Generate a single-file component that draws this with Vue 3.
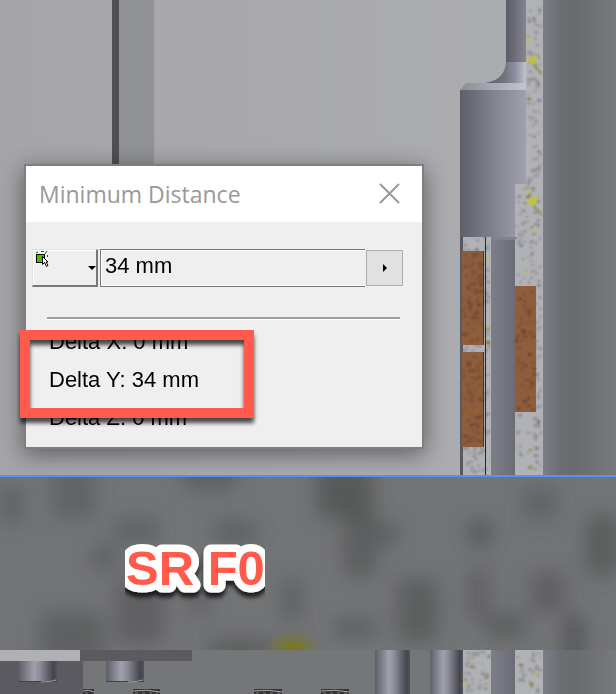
<template>
  <main class="viewport">
    <svg class="model" viewBox="0 0 616 694" preserveAspectRatio="xMinYMin slice" aria-hidden="true">
      <defs>
        <linearGradient id="wall">
          <stop offset="0" stop-color="#a5a5a9" />
          <stop offset="0.4" stop-color="#a9a9ad" />
          <stop offset="0.75" stop-color="#abacaf" />
          <stop offset="1" stop-color="#a9abac" />
        </linearGradient>
        <linearGradient id="collar">
          <stop offset="0" stop-color="#5e5e69" />
          <stop offset="0.45" stop-color="#7f7f8b" />
          <stop offset="1" stop-color="#a1a1ae" />
        </linearGradient>
        <linearGradient id="chamfer">
          <stop offset="0" stop-color="#8d8d9a" />
          <stop offset="1" stop-color="#c4c3d1" />
        </linearGradient>
        <linearGradient id="rod">
          <stop offset="0" stop-color="#5b5b66" />
          <stop offset="1" stop-color="#858591" />
        </linearGradient>
        <linearGradient id="fillet">
          <stop offset="0" stop-color="#5e5e69" />
          <stop offset="0.5" stop-color="#757581" />
          <stop offset="0.75" stop-color="#9090a0" />
          <stop offset="1" stop-color="#c3c2d0" />
        </linearGradient>
        <linearGradient id="shaft">
          <stop offset="0" stop-color="#7e7e89" />
          <stop offset="1" stop-color="#6c6c76" />
        </linearGradient>
        <linearGradient id="housing">
          <stop offset="0" stop-color="#7d7d88" />
          <stop offset="0.22" stop-color="#6d6e75" />
          <stop offset="0.45" stop-color="#696b6d" />
          <stop offset="1" stop-color="#77797a" />
        </linearGradient>
        <linearGradient id="pin">
          <stop offset="0" stop-color="#5f5f6a" />
          <stop offset="0.4" stop-color="#a1a1ae" />
          <stop offset="0.55" stop-color="#8d8d99" />
          <stop offset="0.9" stop-color="#45454e" />
          <stop offset="1" stop-color="#52525d" />
        </linearGradient>
        <radialGradient id="mossGlow">
          <stop offset="0" stop-color="#7b7a16" />
          <stop offset="0.4" stop-color="#78772f" stop-opacity="0.8" />
          <stop offset="1" stop-color="#737455" stop-opacity="0" />
        </radialGradient>
        <filter id="soften" filterUnits="userSpaceOnUse" x="-40" y="440" width="700" height="260">
          <feGaussianBlur stdDeviation="10" />
        </filter>
        <filter id="grain" x="-20%" y="-20%" width="140%" height="140%">
          <feGaussianBlur stdDeviation="0.8" />
        </filter>
        <filter id="labelShadow" x="-10%" y="-10%" width="120%" height="140%">
          <feDropShadow dx="0" dy="5" stdDeviation="2" flood-color="#000" flood-opacity="0.75" />
        </filter>
        <clipPath id="lensClip"><rect x="0" y="477" width="616" height="173" /></clipPath>
        <clipPath id="labelClip"><rect x="125" y="530" width="140" height="80" /></clipPath>
      </defs>

      <!-- section view -->
      <rect width="616" height="475" fill="url(#wall)" />
      <rect x="119" width="35" height="166" fill="#919296" />
      <rect x="112" width="7" height="166" fill="#505051" />

      <rect x="463" y="237" width="28" height="238" fill="#b1b2b6" />
      <rect x="515" y="0" width="28" height="475" fill="#b1b2b6" />
      <g filter="url(#grain)">
        <rect v-for="(s, i) in upperSpecks" :key="i" :x="s.x" :y="s.y" :width="s.w" :height="s.h" :fill="s.fill" />
        <path v-for="y in [59, 200]" :key="y" :transform="`translate(526 ${y})`"
          d="M6 2l4 7 6 6" fill="none" stroke="#8a8b4a" stroke-width="2" />
        <path v-for="y in [59, 200]" :key="'y' + y" :transform="`translate(526 ${y})`"
          d="M1 1h7l3-4M5 1l3 4" fill="none" stroke="#c5c719" stroke-width="3" />
      </g>

      <path d="M506 0h20v64h-20z" fill="url(#rod)" />
      <path d="M506 62h20v21h-41q20-3 21-21z" fill="url(#fillet)" />
      <path d="M466 83h60v7h-66z" fill="url(#chamfer)" />
      <path d="M460 90h66v94h-11v53h-55z" fill="url(#collar)" />
      <rect x="460" y="237" width="3" height="238" fill="#595964" />
      <rect x="491" y="237" width="24" height="238" fill="url(#shaft)" />
      <path d="M491 237h27l-3 3h-24z" fill="#82828d" />
      <rect v-for="c in coils" :key="c.x + '-' + c.y" :x="c.x" :y="c.y" :width="c.w" :height="c.h" fill="#8e5d3d" />
      <g filter="url(#grain)">
        <rect v-for="(s, i) in coilSpecks" :key="i" :x="s.x" :y="s.y" :width="s.w" :height="s.h" :fill="s.fill" />
      </g>
      <path d="M483 251h1v94h-1zM483 352h1v95h-1z" fill="#4b3224" />
      <rect x="485" y="237" width="1" height="238" fill="#1713b5" />
      <rect x="543" width="73" height="475" fill="url(#housing)" />

      <!-- magnified strip -->
      <rect y="475" width="616" height="2" fill="#5094f8" />
      <rect y="477" width="616" height="173" fill="#737476" />
      <g clip-path="url(#lensClip)">
        <g filter="url(#soften)">
          <rect v-for="(b, i) in blotches" :key="i" :x="b[0] - b[2]" :y="b[1] - b[3]"
            :width="b[2] * 2" :height="b[3] * 2" rx="8" fill="#505152" :opacity="b[4]" />
        </g>
        <ellipse cx="293" cy="649" rx="30" ry="20" fill="url(#mossGlow)" />
      </g>
      <g clip-path="url(#labelClip)">
        <text class="marker" x="126" y="585" filter="url(#labelShadow)">SR F0</text>
      </g>

      <!-- lower section -->
      <rect y="650" width="616" height="44" fill="#757678" />
      <rect y="650" width="80" height="11" fill="#b0b0b5" />
      <path d="M80 650h112v11H83v33H0v-33h80z" fill="#5b5a60" />
      <g v-for="x in [19, 106]" :key="x">
        <rect :x="x" y="661" width="38" height="20" fill="url(#pin)" />
        <path :d="`M${x} 681h38v1h-38z`" fill="#41414c" />
        <path :d="`M${x + 22} 682q9 0 15-2`" fill="none" stroke="#9999ad" />
      </g>
      <g v-for="c in clips" :key="c.x">
        <rect :x="c.x" y="689" :width="c.w" height="5" fill="#343436" />
        <path :d="`M${c.x} 691q${c.w / 2} -2 ${c.w} 1`" fill="none" stroke="#aaaaaa" />
        <path :d="`M${c.x + 2} 693h${c.w - 4}`" stroke="#77777a" stroke-dasharray="3 4" />
      </g>
      <rect x="375" y="650" width="35" height="44" fill="url(#pin)" />
      <rect x="430" y="650" width="33" height="44" fill="url(#pin)" />
      <rect x="463" y="650" width="80" height="44" fill="#b1b2b6" />
      <g filter="url(#grain)">
        <rect v-for="(s, i) in lowerSpecks" :key="i" :x="s.x" :y="s.y" :width="s.w" :height="s.h" :fill="s.fill" />
      </g>
      <rect x="491" y="650" width="24" height="44" fill="url(#shaft)" />
      <rect x="543" y="650" width="73" height="44" fill="url(#housing)" />
    </svg>

    <section class="dialog" role="dialog" aria-labelledby="dialog-title">
      <header class="title-bar">
        <h1 id="dialog-title">Minimum Distance</h1>
        <button class="close" type="button" aria-label="Close">
          <svg width="22" height="22" viewBox="0 0 22 22">
            <path d="M2 1l19 19M21 1l-19 19" fill="none" stroke="#999" stroke-width="2" />
          </svg>
        </button>
      </header>

      <div class="measure">
        <button class="picker" type="button" aria-label="Select">
          <svg width="14" height="16" viewBox="0 0 14 16">
            <path d="M1 3l3-3h9v9l-3 3z" fill="#f4fff0" />
            <path d="M1 2l2-1M6 0.500h3M12 0l-2 3M12.500 4v2" fill="none" stroke="#1c5a08" />
            <rect x="1" y="3" width="9" height="9" fill="#4dba0b" />
            <path d="M1.500 3.500v8h8v-8z" fill="none" stroke="#000" />
            <path d="M7.500 5.500v8l2-2 2 4 1.500-1-2-3.500h2z" fill="#fff" stroke="#000" />
          </svg>
          <span class="caret-down"></span>
        </button>
        <input class="value" type="text" v-model="distance" aria-label="Distance" readonly />
        <button class="more" type="button" aria-label="More options">
          <span class="caret-right"></span>
        </button>
      </div>

      <hr />

      <ul class="deltas">
        <li v-for="d in deltas" :key="d.axis">Delta {{ d.axis }}: {{ d.value }} mm</li>
      </ul>
      <div class="highlight"></div>
    </section>
  </main>
</template>

<script setup>
  import { ref } from 'vue';

  const distance = ref('34 mm');

  const deltas = [
    { axis: 'X', value: 0 },
    { axis: 'Y', value: 34 },
    { axis: 'Z', value: 0 }
  ];

  const coils = [
    { x: 462, y: 251, w: 22, h: 94 },
    { x: 462, y: 352, w: 22, h: 95 },
    { x: 515, y: 286, w: 21, h: 126 }
  ];

  const clips = [
    { x: 83, w: 11 },
    { x: 133, w: 27 },
    { x: 254, w: 28 },
    { x: 321, w: 28 }
  ];

  // cx, cy, rx, ry, opacity
  const blotches = [
    [12, 505, 11, 18, 0.6],
    [74, 495, 22, 24, 0.5],
    [210, 474, 26, 16, 0.6],
    [137, 530, 22, 11, 0.6],
    [104, 558, 11, 12, 0.7],
    [235, 532, 22, 11, 0.6],
    [140, 612, 24, 32, 0.55],
    [72, 636, 32, 24, 0.6],
    [292, 600, 9, 22, 0.65],
    [240, 650, 34, 10, 0.7],
    [200, 600, 12, 16, 0.4],
    [345, 492, 28, 26, 0.8],
    [360, 545, 16, 32, 0.65],
    [386, 534, 13, 10, 0.7],
    [480, 533, 10, 12, 1],
    [540, 503, 18, 18, 0.45],
    [602, 545, 16, 30, 0.7],
    [418, 610, 20, 32, 0.65],
    [479, 594, 10, 26, 0.55],
    [355, 628, 22, 9, 0.65],
    [506, 626, 20, 12, 0.65],
    [548, 592, 18, 20, 0.55],
    [574, 640, 9, 26, 0.95]
  ];

  // repeatable noise, so the stone looks the same on each render
  function noise(seed) {
    let n = seed;
    return () => {
      n = (n * 16807) % 2147483647;
      return n / 2147483647;
    };
  }

  function specks(area, count, colors, seed) {
    const rand = noise(seed);
    const list = [];
    for (let i = 0; i < count; i++) {
      list.push({
        x: area.x + Math.floor(rand() * (area.w - 3)),
        y: area.y + Math.floor(rand() * (area.h - 3)),
        w: 2 + Math.floor(rand() * 3),
        h: 2 + Math.floor(rand() * 2),
        fill: colors[Math.floor(rand() * colors.length)]
      });
    }
    return list;
  }

  const stone = ['#8b8c8f', '#97989b', '#97989b', '#85868a', '#8f9093', '#97989b', '#9b9c9e', '#8b8c8f'];
  const moss = ['#c2c41c', '#73732a', '#8c8c2e'];
  const copper = ['#74492d', '#7c5033', '#955f35', '#694430', '#80543a'];

  const upperSpecks = [
    ...specks({ x: 526, y: 0, w: 17, h: 475 }, 190, stone, 4021),
    ...specks({ x: 526, y: 0, w: 17, h: 475 }, 18, moss, 733),
    ...specks({ x: 515, y: 184, w: 12, h: 291 }, 50, stone, 9127),
    ...specks({ x: 463, y: 237, w: 28, h: 238 }, 160, stone, 551),
    ...specks({ x: 486, y: 237, w: 6, h: 238 }, 5, moss, 87)
  ];
  const coilSpecks = coils.flatMap((c, i) => specks(c, 80, copper, 311 + i * 97));
  const lowerSpecks = [
    ...specks({ x: 463, y: 650, w: 28, h: 44 }, 40, stone, 1213),
    ...specks({ x: 515, y: 650, w: 28, h: 44 }, 26, stone, 6007),
    ...specks({ x: 463, y: 650, w: 80, h: 44 }, 9, moss, 417)
  ];
</script>

<style>
  body{
    margin: 0;
    background: #757678;
  }
</style>

<style scoped>
  .viewport{
    position: relative;
    min-height: 100vh;
    overflow: hidden;
    font-family: "Liberation Sans", Arial, sans-serif;
  }

  .model{
    display: block;
    width: 100%;
    height: 100vh;
  }

  .marker{
    font-size: 49px;
    font-weight: bold;
    fill: #ff5a4c;
    stroke: #fff;
    stroke-width: 15px;
    stroke-linejoin: round;
    paint-order: stroke;
  }

  .dialog{
    position: absolute;
    top: 164px;
    left: 24px;
    width: 396px;
    border: 2px solid #7e7e80;
    background: #efefef;
    box-shadow: 0 5px 22px rgba(0, 0, 0, 0.45);
  }

  .title-bar{
    display: flex;
    align-items: center;
    justify-content: space-between;
    height: 56px;
    padding: 0 22px 0 13px;
    background: #fff;
  }

  .title-bar h1{
    margin: 0;
    font: 400 23px/32px "Open Sans", "Noto Sans", sans-serif;
    color: #999;
  }

  button{
    box-sizing: border-box;
    padding: 0;
    border-radius: 0;
  }

  .close{
    display: flex;
    border: 0;
    background: none;
  }

  .measure{
    display: flex;
    align-items: center;
    padding: 27px 19px 0 6px;
  }

  .picker{
    display: flex;
    justify-content: space-between;
    width: 66px;
    height: 38px;
    margin-right: 2px;
    padding: 1px 0 0 2px;
    border: 1px solid #e2e2e2;
    border-right: 2px solid #777;
    border-bottom: 2px solid #777;
    background: #efefef;
    box-shadow: inset 1px 1px #fff;
  }

  .caret-down{
    align-self: center;
    border: 4px solid transparent;
    border-top-color: #000;
    border-bottom: 0;
  }

  .value{
    flex: 1;
    box-sizing: border-box;
    min-width: 0;
    height: 38px;
    padding: 0 4px 4px;
    border: 1px solid #777;
    border-right: 0;
    border-radius: 0;
    outline: 0;
    background: #efefef;
    box-shadow: inset 1px 1px #fff, inset 0 -1px #fff;
    font: 22px "Liberation Sans", Arial, sans-serif;
    color: #000;
  }

  .more{
    display: flex;
    align-items: center;
    justify-content: center;
    width: 37px;
    height: 36px;
    margin-left: 1px;
    border: 1px solid #adadad;
    background: #e1e1e1;
  }

  .caret-right{
    border: 4px solid transparent;
    border-left-color: #000;
    border-right: 0;
  }

  hr{
    height: 2px;
    margin: 30px 22px 0 21px;
    border: 0;
    border-bottom: 1px solid #fff;
    background: #a0a0a0;
  }

  .deltas{
    margin: 0;
    padding: 3px 22px 10px 23px;
    list-style: none;
    font-size: 22px;
    line-height: 38px;
    color: #000;
  }

  .highlight{
    position: absolute;
    top: 164px;
    left: -6px;
    box-sizing: border-box;
    width: 234px;
    height: 88px;
    border: 10px solid #ff5a4c;
    filter: drop-shadow(0 5px 2px rgba(0, 0, 0, 0.7));
  }
</style>
